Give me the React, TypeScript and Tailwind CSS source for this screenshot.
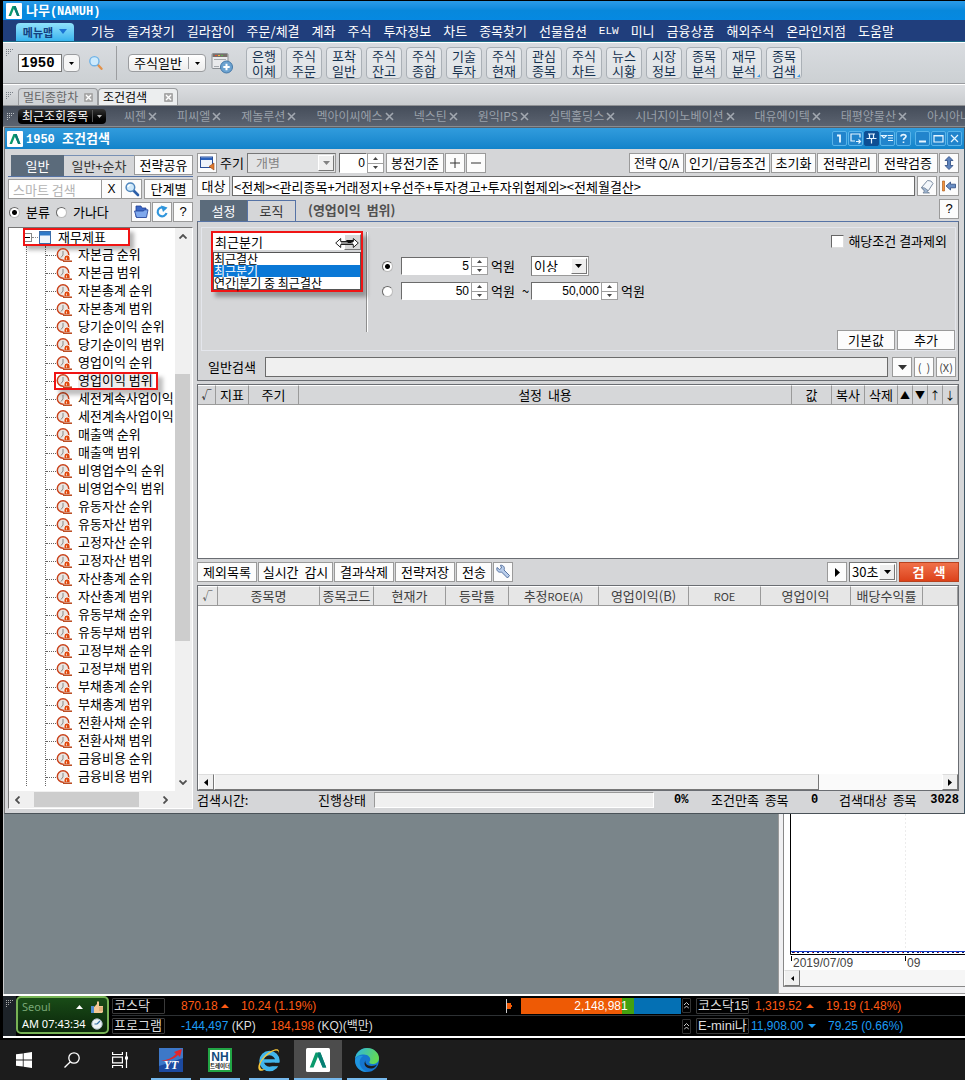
import { useState } from 'react';
import type { ReactNode } from 'react';

const menus = ['기능', '즐겨찾기', '길라잡이', '주문/체결', '계좌', '주식', '투자정보', '차트', '종목찾기', '선물옵션', 'ELW', '미니', '금융상품', '해외주식', '온라인지점', '도움말'];
const quick = [['은행', '이체'], ['주식', '주문'], ['포착', '일반'], ['주식', '잔고'], ['주식', '종합'], ['기술', '투자'], ['주식', '현재'], ['관심', '종목'], ['주식', '차트'], ['뉴스', '시황'], ['시장', '정보'], ['종목', '분석'], ['재무', '분석'], ['종목', '검색']];
const recents = ['씨젠', '피씨엘', '제놀루션', '멕아이씨에스', '넥스틴', '원익IPS', '심텍홀딩스', '시너지이노베이션', '대유에이텍', '태평양물산', '아시아나'];
const treeItems = [
  '자본금 순위', '자본금 범위', '자본총계 순위', '자본총계 범위', '당기순이익 순위', '당기순이익 범위', '영업이익 순위', '영업이익 범위',
  '세전계속사업이익', '세전계속사업이익 ', '매출액 순위', '매출액 범위', '비영업수익 순위', '비영업수익 범위', '유동자산 순위', '유동자산 범위',
  '고정자산 순위', '고정자산 범위', '자산총계 순위', '자산총계 범위', '유동부채 순위', '유동부채 범위', '고정부채 순위', '고정부채 범위',
  '부채총계 순위', '부채총계 범위', '전환사채 순위', '전환사채 범위', '금융비용 순위', '금융비용 범위',
];
const periods = ['최근결산', '최근분기', '연간|분기 중 최근결산'];

function Btn({ children, className = '', label }: { children: ReactNode; className?: string; label?: string }) {
  return (
    <button type="button" aria-label={label} className={`flex h-5 shrink-0 items-center justify-center whitespace-nowrap border border-[#9a9a9a] bg-[#fcfcfc] leading-4 ${className}`}>
      {children}
    </button>
  );
}

function Tri({ dir = 'down', className = 'h-1 w-[7px]' }: { dir?: 'up' | 'down' | 'left' | 'right'; className?: string }) {
  const d = { down: 'M0 0H10L5 10Z', up: 'M0 10H10L5 0Z', left: 'M10 0V10L0 5Z', right: 'M0 0V10L10 5Z' }[dir];
  return (
    <svg viewBox="0 0 10 10" preserveAspectRatio="none" className={`shrink-0 ${className}`} fill="currentColor" aria-hidden="true">
      <path d={d} />
    </svg>
  );
}

function Grip({ className = 'text-[#7a8088]' }: { className?: string }) {
  return (
    <svg viewBox="0 0 8 7" className={`h-[7px] w-2 shrink-0 ${className}`} fill="currentColor" aria-hidden="true">
      <path d="M0 0h1v1H0zM2 0h1v1H2zM4 0h1v1H4zM6 0h1v1H6zM0 2h1v1H0zM2 2h1v1H2zM4 2h1v1H4zM0 4h1v1H0zM2 4h1v1H2zM0 6h1v1H0z" />
    </svg>
  );
}

function NamuLogo({ className = 'size-4' }: { className?: string }) {
  return (
    <svg viewBox="0 0 16 16" className={`shrink-0 ${className}`} aria-hidden="true">
      <rect width="16" height="16" rx="1" fill="#fff" />
      <path d="M2.5 13L6.4 3h3.2l3.9 10h-2.4L8 5.6 5 13z" fill="#0a9a6c" />
      <path d="M8 3h1.6l3.9 10h-2.4L8 5.6z" fill="#067e74" />
    </svg>
  );
}

function Lens({ className = 'size-4' }: { className?: string }) {
  return (
    <svg viewBox="0 0 16 16" className={className} aria-hidden="true">
      <path d="M9.5 9.5l4.5 4.5" stroke="#2b5ea8" strokeWidth="2.6" strokeLinecap="round" />
      <circle cx="6.4" cy="6.2" r="4.3" fill="#cfe9fb" stroke="#4f86bd" strokeWidth="1.5" />
      <path d="M4 6a2.4 2.4 0 0 1 2.4-2.2" stroke="#fff" strokeWidth="1.3" fill="none" />
    </svg>
  );
}

function ToolbarLens() {
  return (
    <svg viewBox="0 0 16 16" className="size-4" aria-hidden="true">
      <path d="M9.800 9.800l3.700 4" stroke="#e2914a" strokeWidth="2.400" strokeLinecap="round" />
      <circle cx="6.400" cy="6.200" r="4.600" fill="#cdeafc" stroke="#6fb2e6" strokeWidth="1.400" />
    </svg>
  );
}

function ClockIcon() {
  return (
    <svg viewBox="0 0 16 14" className="h-3.5 w-4 shrink-0" aria-hidden="true">
      <circle cx="7" cy="6.500" r="5.700" fill="#e9e6e3" stroke="#c9421a" strokeWidth="1.500" />
      <path d="M7 3v4L5 9.500" stroke="#8d8884" strokeWidth="1" fill="none" />
      <path d="M8 12.500V10a3 3 0 0 1 6 0v2.500z" fill="#e04a10" stroke="#fff" strokeWidth=".8" />
      <path d="M10.500 11.500v-2" stroke="#ffd2b8" strokeWidth="1" />
      <path d="M7 13.200h9" stroke="#b43a0c" strokeWidth="1.400" />
    </svg>
  );
}

function Spinner({ label, className = 'h-[18px]' }: { label: string; className?: string }) {
  return (
    <span className={`flex w-[17px] shrink-0 flex-col bg-white ${className}`}>
      <button type="button" aria-label={`${label} 증가`} className="flex flex-1 items-center justify-center border border-[#a0a0a0] text-[#444]"><Tri dir="up" className="h-[3px] w-[5px]" /></button>
      <button type="button" aria-label={`${label} 감소`} className="flex flex-1 items-center justify-center border border-t-0 border-[#a0a0a0] text-[#444]"><Tri className="h-[3px] w-[5px]" /></button>
    </span>
  );
}

function NumberBox({ value, label, className = '' }: { value: string; label: string; className?: string }) {
  return <input type="text" defaultValue={value} aria-label={label} className={`border border-b-white border-l-[#6b6b6b] border-r-white border-t-[#6b6b6b] bg-white pr-px text-right font-['Liberation_Sans'] text-[12px] leading-3 ${className}`} />;
}

function Select({ options, label, className = '', disabled = false }: { options: string[]; label: string; className?: string; disabled?: boolean }) {
  return (
    <span className={`relative flex shrink-0 border border-b-[#9a9a9a] border-l-[#777] border-r-[#9a9a9a] border-t-[#777] ${disabled ? 'bg-[#e2e3e4] text-[#828282]' : 'bg-white'} ${className}`}>
      <select aria-label={label} disabled={disabled} className={`w-full appearance-none bg-transparent leading-3 opacity-100 ${disabled ? 'pl-2' : 'pl-0.5'}`}>
        {options.map((o) => <option key={o}>{o}</option>)}
      </select>
      <span className="pointer-events-none absolute inset-y-px right-px flex w-4 items-center justify-center border border-b-[#777] border-l-white border-r-[#777] border-t-white bg-[#efefef]">
        <Tri />
      </span>
    </span>
  );
}

function Radio({ name, label, defaultChecked = false }: { name: string; label?: string; defaultChecked?: boolean }) {
  return <input type="radio" name={name} aria-label={label} defaultChecked={defaultChecked} className="size-[11px] shrink-0 appearance-none rounded-full border border-b-[#bbb] border-l-[#666] border-r-[#bbb] border-t-[#666] bg-white bg-[radial-gradient(circle,#fff_100%,#fff_100%)] checked:bg-[radial-gradient(circle,#000_0_2px,#fff_3px)]" />;
}

const thBase = 'border-b border-r border-b-[#9a9a9a] border-r-[#9a9a9a] border-t border-t-white p-0 text-center font-normal leading-4 overflow-hidden whitespace-nowrap';

function GridHead({ cols, className }: { cols: [ReactNode, string][]; className: string }) {
  return (
    <table className="w-full table-fixed border-separate border-spacing-0">
      <thead>
        <tr className="h-5">
          {cols.map(([c, w], i) => <th key={i} scope="col" className={`${thBase} ${className} ${w}`}>{c}</th>)}
        </tr>
      </thead>
    </table>
  );
}

function TopBars() {
  return (
    <header>
      <div className="flex h-[19px] items-center gap-1 overflow-hidden bg-gradient-to-b from-[#2a9be8] via-[#0788dc] to-[#0589e2] px-[3px] font-bold text-white">
        <NamuLogo />
        <h1 className="leading-4">나무<span className="font-['Liberation_Mono'] text-[12px]">(NAMUH)</span></h1>
      </div>
      <nav className="flex h-[21px] items-center gap-3 overflow-hidden bg-[#203e7c] pl-[13px] text-white">
        <button type="button" className="mr-[5px] mt-0.5 flex h-[18px] w-[58px] shrink-0 items-center justify-center gap-1.5 rounded-t-sm bg-gradient-to-b from-[#8fe2fb] to-[#35b3ee] text-[11px] font-bold leading-4 text-[#14407e]">
          메뉴맵 <Tri className="h-[5px] w-2 text-[#1b74d4]" />
        </button>
        {menus.map((m) => <a key={m} href="#menu" className={`shrink-0 leading-4 ${m === 'ELW' ? "font-['Liberation_Mono'] text-[11px]" : ''}`}>{m}</a>)}
      </nav>
      <div className="h-0.5 border-b border-white bg-[#1c6a86]" />
      <div className="flex h-[41px] gap-1 overflow-hidden border-b border-[#9a9c9f] bg-gradient-to-b from-[#d9dce0] to-[#ccd0d3] pl-[3px]">
        <div className="pt-1.5"><Grip /></div>
        <div className="flex items-center">
          <input type="text" aria-label="화면번호" defaultValue="1950" className="h-[18px] w-11 border border-[#777] bg-white pl-0.5 font-['Liberation_Mono'] text-[14px] font-bold" />
          <button type="button" aria-label="화면번호 목록" className="ml-px flex h-[18px] w-[17px] items-center justify-center rounded-sm border border-[#9a9c9f] bg-[#f6f6f6]"><Tri className="h-[3px] w-[5px]" /></button>
          <button type="button" aria-label="화면 찾기" className="ml-2"><ToolbarLens /></button>
          <span className="ml-3 h-[34px] w-px bg-[#9b9da0]" />
          <button type="button" className="ml-[11px] flex h-[18px] w-[78px] items-center rounded-sm border border-[#9a9c9f] bg-gradient-to-b from-white to-[#ececec] pl-[5px] leading-4">
            주식일반<span className="ml-1.5 h-3 w-px bg-[#9b9da0]" /><Tri className="ml-1.5 h-[3px] w-[5px]" />
          </button>
          <button type="button" aria-label="화면 추가" className="ml-[5px]">
            <svg viewBox="0 0 23 22" className="h-[22px] w-[23px]" aria-hidden="true">
              <rect x="1" y="1.5" width="16" height="15" rx="1" fill="#e9eaec" stroke="#8b8f94" />
              <path d="M1.5 2h15v3h-15z" fill="#77706a" /><path d="M4 3h2v1H4z" fill="#e34a2f" /><path d="M7 3h2v1H7z" fill="#f0b53b" /><path d="M10 3h2v1h-2z" fill="#59b450" />
              <path d="M3 7h12v1H3zM3 14h5v1H3z" fill="#a5a9ae" />
              <circle cx="15.5" cy="15" r="6" fill="#6ba2d0" stroke="#4478a8" />
              <path d="M15.5 11.8v6.4M12.3 15h6.4" stroke="#fff" strokeWidth="2" />
            </svg>
          </button>
        </div>
        <div className="ml-2 flex gap-1 pt-1">
          {quick.map(([a, b], i) => (
            <button key={i} type="button" className="relative h-8 w-9 shrink-0 rounded-sm border border-[#aab0b6] bg-gradient-to-b from-[#e6e9ec] to-[#e0e3e6] leading-[15px] text-[#16324f]">
              {a}<br />{b}
              {i > 11 && <svg viewBox="0 0 3 3" className="absolute bottom-px right-px size-[3px]" aria-hidden="true"><path d="M3 0v3H0z" fill="#3f9de8" /></svg>}
            </button>
          ))}
        </div>
      </div>
      <div className="flex h-[22px] items-end overflow-hidden border-b border-t border-b-[#8f9194] border-t-white bg-gradient-to-b from-[#dcdee1] to-[#c9cccf] pl-[3px] text-[12px]">
        <div className="mr-1 self-center"><Grip /></div>
        {['멀티종합차', '조건검색'].map((t, i) => (
          <div key={t} className={`flex h-[17px] w-20 shrink-0 items-center justify-between rounded-t-sm border border-b-0 border-[#9a9c9f] px-1 ${i ? 'bg-[#eceeef] text-black' : 'bg-[#d0d3d6] text-[#666]'}`}>
            <a href="#tab" className="leading-4">{t}</a>
            <button type="button" aria-label={`${t} 닫기`} className="flex size-[9px] items-center justify-center rounded-[1px] bg-[#a8a8a8]">
              <svg viewBox="0 0 7 7" className="size-[7px]" stroke="#fff" strokeWidth="1.4" aria-hidden="true"><path d="M1 1l5 5M6 1L1 6" /></svg>
            </button>
          </div>
        ))}
      </div>
      <div className="flex h-[21px] items-center overflow-hidden border-b border-[#8b8d90] bg-gradient-to-b from-[#454d5a] to-[#5b6370] pl-1 text-[12px] text-[#99a0a9]">
        <Grip className="text-[#c0c4c8]" />
        <button type="button" className="ml-[3px] mr-[18px] flex h-[15px] w-[88px] shrink-0 items-center rounded-sm bg-gradient-to-b from-[#333] to-black pl-1 leading-[14px] text-white">
          최근조회종목<span className="ml-1 h-3 w-px bg-[#555]" /><Tri className="ml-1 h-[3px] w-[5px] text-[#bbb]" />
        </button>
        {recents.map((r) => (
          <span key={r} className="mr-5 flex shrink-0 items-center gap-0.5">
            <a href="#stock" className="leading-4">{r}</a>
            <button type="button" aria-label={`${r} 삭제`}><svg viewBox="0 0 9 9" className="size-[9px]" stroke="#a2a8b0" strokeWidth="1.6" aria-hidden="true"><path d="M1 1l7 7M8 1L1 8" /></svg></button>
          </span>
        ))}
      </div>
    </header>
  );
}

const capIcons: [string, ReactNode][] = [
  ['화면 그룹', <path key="a" d="M5 4.500h3V11.500" strokeWidth="1.800" />],
  ['화면 복사', <path key="a" d="M12 6.500V3H3v7h4M8 10.500h4.500M10.500 8.500l2 2-2 2" />],
  ['고정', <path key="a" d="M4 3h7M5.500 3v4M9.500 3v4M2.500 7.500h10M7.500 7.500V12.500" />],
  ['메뉴', <path key="a" d="M1.500 4.500h5L4 7zM8 4.500h5M8 7h5M8 9.500h5" />],
  ['도움말', <path key="a" d="M5 5.500C5 3 10 3 10 5.500 10 7 7.500 7 7.500 9M7.500 10.500v1.500" strokeWidth="1.600" />],
];
const winIcons: [string, ReactNode][] = [
  ['최소화', <path key="a" d="M4 10.500h7" strokeWidth="2" />],
  ['최대화', <path key="a" d="M3 4.500h9V11H3zM3 5h9" />],
  ['닫기', <path key="a" d="M4 4l7 7M11 4l-7 7" />],
];

function CapBtn({ icon, dark }: { icon: [string, ReactNode]; dark?: boolean }) {
  return (
    <button type="button" aria-label={icon[0]} className={`flex size-[15px] items-center justify-center rounded-[2px] border ${dark ? 'border-[#0d4f94] bg-[#0d4f94]' : 'border-[#58b4ea] bg-[#2184cc]'}`}>
      <svg viewBox="0 0 15 15" className="size-[15px] shrink-0" fill="none" stroke="#e6f5ff" strokeWidth="1.2" aria-hidden="true">{icon[1]}</svg>
    </button>
  );
}

function TreePanel() {
  return (
    <aside className="flex w-[185px] shrink-0 flex-col pt-0.5">
      <div className="flex h-[22px] items-end border-b border-[#5673a5] pl-[3px]">
        <button type="button" className="h-[21px] w-[53px] bg-[#5b6b7b] text-white">일반</button>
        <button type="button" className="h-[21px] w-[70px] border-t border-[#7890b4] text-[#333]">일반+순차</button>
        <Btn className="w-[59px] self-start">전략공유</Btn>
      </div>
      <div className="mt-0.5 flex h-5">
        <input type="text" aria-label="스마트 검색" placeholder="스마트 검색" className="h-5 w-[94px] border border-[#9a9a9a] bg-white pl-1 placeholder:text-[#b4b4b4]" />
        <Btn label="지우기" className="w-5 border-l-0"><span className="font-['Liberation_Sans'] text-[12px]">X</span></Btn>
        <Btn label="검색" className="mr-0.5 w-5 border-l-0"><Lens /></Btn>
        <Btn className="w-[49px]">단계별</Btn>
      </div>
      <div className="mt-[3px] flex h-5 items-center pl-px">
        <label className="flex items-center gap-1.5 leading-4"><Radio name="sort" defaultChecked />분류</label>
        <label className="ml-1.5 flex items-center gap-1.5 leading-4"><Radio name="sort" />가나다</label>
        <div className="ml-auto flex gap-px">
          <Btn label="폴더" className="w-5">
            <svg viewBox="0 0 16 16" className="size-4" aria-hidden="true"><path d="M3 2h5l1 2h4v9H3z" fill="#3c68c6" stroke="#1f3f95" strokeWidth=".8" /><path d="M1.500 7h9l1-1.200H15L13.500 13.500H3.500z" fill="#7fa8ec" stroke="#1f3f95" strokeWidth=".8" /></svg>
          </Btn>
          <Btn label="새로고침" className="w-5">
            <svg viewBox="0 0 16 16" className="size-4" aria-hidden="true"><path d="M11.800 5.200A4.500 4.500 0 1 0 12.500 9" fill="none" stroke="#2f95dc" strokeWidth="2.200" /><path d="M7 1.500L13.500 3.500 9 8z" fill="#2f95dc" /></svg>
          </Btn>
          <Btn label="도움말" className="w-5"><span className="font-['Liberation_Sans']">?</span></Btn>
        </div>
      </div>
      <div className="mt-[5px] flex flex-1 flex-col border border-b-white border-l-[#777] border-r-white border-t-[#777] bg-white">
        <div className="flex flex-1">
          <ul className="relative min-w-0 flex-1 pl-[14px]">
            <li className="relative flex h-[18px] items-center">
              <span className="flex size-[9px] shrink-0 items-center justify-center border border-[#888] bg-white"><span className="h-px w-[5px] bg-black" /></span>
              <span className="w-1.5 border-b border-dotted border-[#888]" />
              <svg viewBox="0 0 12 13" className="ml-px h-[13px] w-3" aria-hidden="true"><rect x=".5" y=".5" width="11" height="12" fill="#eef4fb" stroke="#3b6ca8" /><path d="M1 1h10v3.500H1z" fill="#2f79c8" /></svg>
              <button type="button" className="ml-[7px] leading-4">재무제표</button>
              <span className="pointer-events-none absolute inset-y-0 left-0 w-[107px] border-2 border-[#f01414] shadow-[4px_4px_4px_rgba(0,0,0,0.3)]" />
            </li>
            <li className="ml-[3px] border-l border-dotted border-[#666] pl-[18px]">
              <ul className="border-l border-dotted border-[#666]">
                {treeItems.map((t, i) => (
                  <li key={t} className="relative flex h-[18px] items-center overflow-visible">
                    <span className="w-2.5 shrink-0 border-b border-dotted border-[#666]" />
                    <ClockIcon />
                    <button type="button" className="ml-1.5 min-w-0 flex-1 overflow-hidden whitespace-nowrap pb-0.5 text-left leading-4">
                      <span className={i === 7 ? 'bg-[#ededed]' : ''}>{t}</span>
                    </button>
                    {i === 7 && <span className="pointer-events-none absolute inset-y-0 left-2 z-10 w-[104px] border-2 border-[#f01414] shadow-[5px_5px_4px_rgba(0,0,0,0.25)]" />}
                  </li>
                ))}
              </ul>
            </li>
          </ul>
          <div className="flex w-[17px] shrink-0 flex-col items-center bg-[#f0f0f0] py-1.5 pr-0.5">
            <svg viewBox="0 0 8 5" className="h-[5px] w-2" fill="none" stroke="#505050" strokeWidth="1.800" aria-hidden="true"><path d="M.5 4.500L4 1l3.500 3.500" /></svg>
            <span className="flex-[133]" />
            <span className="w-[15px] flex-[262] bg-[#cdcdcd]" />
            <span className="flex-[137]" />
            <svg viewBox="0 0 8 5" className="h-[5px] w-2" fill="none" stroke="#505050" strokeWidth="1.800" aria-hidden="true"><path d="M.5.500L4 4 7.500.500" /></svg>
          </div>
        </div>
        <div className="flex h-[17px] items-center bg-[#f0f0f0] pl-1.5">
          <svg viewBox="0 0 5 8" className="h-2 w-[5px]" fill="none" stroke="#505050" strokeWidth="1.800" aria-hidden="true"><path d="M4.500.500L1 4l3.500 3.500" /></svg>
          <span className="ml-3.5 h-[15px] w-[105px] bg-[#cdcdcd]" />
          <svg viewBox="0 0 5 8" className="ml-6 h-2 w-[5px]" fill="none" stroke="#505050" strokeWidth="1.800" aria-hidden="true"><path d="M.5.500L4 4 .5 7.500" /></svg>
        </div>
      </div>
    </aside>
  );
}

function PeriodPicker() {
  const [value, setValue] = useState(periods[1]);
  return (
    <div className="relative h-[61px] w-[152px] shrink-0 border-2 border-[#f01414] shadow-[4px_5px_4px_rgba(0,0,0,0.3)]">
      <button type="button" aria-haspopup="listbox" className="flex h-[17px] w-full items-center justify-between bg-white pl-0.5 leading-4">
        {value}
        <span className="flex h-4 w-[17px] items-center justify-center border border-b-[#777] border-l-white border-r-[#777] border-t-white bg-[#d8d8d8]"><Tri /></span>
      </button>
      <svg viewBox="0 0 24 12" className="pointer-events-none absolute right-0.5 top-1 h-3 w-6" aria-hidden="true">
        <path d="M.7 6l5-4.500v3h12.600v-3l5 4.500-5 4.500v-3H5.700v3z" fill="#fff" stroke="#222" />
        <path d="M6 6h12" stroke="#222" />
        <path d="M11 3h8l-3 3h-3z" fill="#111" />
      </svg>
      <ul role="listbox" aria-label="결산 기준" className="mt-0.5 border border-[#555] bg-white">
        {periods.map((p) => (
          <li key={p} role="option" aria-selected={p === value} onClick={() => setValue(p)} className={`h-3 whitespace-nowrap text-[12px] leading-3 ${p === value ? 'bg-[#0a78d6] text-white' : ''}`}>{p}</li>
        ))}
      </ul>
    </div>
  );
}

function ConditionPanel() {
  return (
    <section className="border border-[#6a6d72] border-t-[#5673a5] pb-[3px]">
      <div className="ml-[3px] mr-0.5 mt-[5px] flex h-[124px] border border-[#e4e6ec] pl-[9px] pt-[3px]">
        <PeriodPicker />
        <span className="ml-[3px] mt-px h-[100px] w-0.5 border-r border-white bg-[#8e8e8e]" />
        <div className="ml-3.5 flex flex-col gap-[7px] pt-[26px]">
          <div className="flex h-[18px] items-center">
            <Radio name="amount" label="이상" defaultChecked />
            <NumberBox value="5" label="금액" className="ml-2 h-[18px] w-[70px]" /><Spinner label="금액" />
            <span className="ml-[3px]">억원</span>
            <Select label="비교" options={['이상', '이하']} className="ml-4 h-5 w-[58px]" />
          </div>
          <div className="flex h-[18px] items-center">
            <Radio name="amount" label="범위" />
            <NumberBox value="50" label="최소 금액" className="ml-2 h-[18px] w-[70px]" /><Spinner label="최소 금액" />
            <span className="ml-[3px]">억원</span><span className="ml-[7px] w-[9px]">~</span>
            <NumberBox value="50,000" label="최대 금액" className="h-[18px] w-[70px]" /><Spinner label="최대 금액" />
            <span className="ml-[3px]">억원</span>
          </div>
        </div>
        <div className="ml-auto flex flex-col items-end justify-between">
          <label className="flex items-center gap-1 pr-2 pt-0.5 leading-4">
            <input type="checkbox" className="size-[13px] appearance-none border border-b-[#ddd] border-l-[#666] border-r-[#ddd] border-t-[#666] bg-white checked:bg-[#333]" />해당조건 결과제외
          </label>
          <div className="flex gap-0.5"><Btn className="w-[58px]">기본값</Btn><Btn className="w-[58px]">추가</Btn></div>
        </div>
      </div>
      <div className="mt-1.5 flex h-5 items-center gap-0.5 pl-2.5 pr-0.5">
        <label htmlFor="expr" className="mr-[7px]">일반검색</label>
        <input id="expr" type="text" className="mr-0.5 h-5 min-w-0 flex-1 border border-[#6b6b6b] bg-[#f0f0f0] px-1" />
        <Btn label="목록" className="w-5 text-[#333]"><Tri className="h-[5px] w-[9px]" /></Btn>
        <Btn className="w-5 text-[11px] text-[#444]">(&nbsp; )</Btn>
        <Btn className="w-5 text-[11px] text-[#444]">(X)</Btn>
      </div>
    </section>
  );
}

function SearchPanel() {
  return (
    <main className="flex min-w-0 flex-1 flex-col gap-[3px]">
      <div className="flex h-5 items-center">
        <Btn label="창 이동" className="w-5">
          <svg viewBox="0 0 16 16" className="size-4" aria-hidden="true"><rect x="1.500" y="2" width="12" height="10.500" fill="#eef3fb" stroke="#2b4f98" /><path d="M2 2.500h11v2.500H2z" fill="#2b62bd" /><path d="M15 8v7l-5-3.500z" fill="#e07a2d" stroke="#934410" strokeWidth=".6" /></svg>
        </Btn>
        <span className="ml-[3px] w-[27px]">주기</span>
        <Select label="주기" options={['개별']} disabled className="h-5 w-[89px]" />
        <NumberBox value="0" label="봉전" className="ml-[3px] h-5 w-7" /><Spinner label="봉전" className="h-5" />
        <Btn className="ml-0.5 w-[58px]">봉전기준</Btn>
        <Btn label="추가" className="ml-px w-5"><svg viewBox="0 0 10 10" className="size-2.5" stroke="#333" aria-hidden="true"><path d="M0 5h10M5 0v10" /></svg></Btn>
        <Btn label="삭제" className="ml-px w-5"><svg viewBox="0 0 10 10" className="size-2.5" stroke="#333" aria-hidden="true"><path d="M0 5h10" /></svg></Btn>
        <div className="ml-auto flex gap-px">
          <Btn className="w-[55px]"><span className="text-[12px]">전략 Q/A</span></Btn>
          <Btn className="w-[85px]">인기/급등조건</Btn>
          <Btn className="w-[45px]">초기화</Btn>
          <Btn className="w-[60px]">전략관리</Btn>
          <Btn className="w-[60px]">전략검증</Btn>
          <Btn label="높이 조절" className="w-5"><svg viewBox="0 0 10 14" className="h-3.5 w-2.5" aria-hidden="true"><path d="M5 .5l4 4H6.500v5H9l-4 4-4-4h2.500v-5H1z" fill="#5d83bd" stroke="#2c4a80" strokeWidth=".8" /></svg></Btn>
        </div>
      </div>
      <div className="flex h-5 gap-0.5">
        <Btn className="w-[33px]">대상</Btn>
        <input type="text" aria-label="대상" readOnly value="<전체><관리종목+거래정지+우선주+투자경고+투자위험제외><전체월결산>" className="h-5 min-w-0 flex-1 border border-[#6b6b6b] bg-white pl-px" />
        <Btn label="지우개" className="w-5"><svg viewBox="0 0 16 16" className="size-4" aria-hidden="true"><path d="M2.500 9.500l6-7Q12.500 2 14 5.500L9.500 12.500Q4.500 13.500 2.500 9.500z" fill="#f3f7fb" stroke="#7d8ea3" /><path d="M2.500 9.500Q5.500 9 9 12.500L8 13.500l2.500 1.500H4l1.500-2z" fill="#9fb6d2" stroke="#6d7f96" strokeWidth=".8" /></svg></Btn>
        <Btn label="패널 접기" className="w-5"><svg viewBox="0 0 16 16" className="size-4" aria-hidden="true"><path d="M1.500 3h2v10h-2z" fill="#f3923b" stroke="#a3510f" strokeWidth=".6" /><path d="M5 8l4.500-4v2.200H14.500v3.600H9.500V12z" fill="#6a8fc4" stroke="#2c4a80" strokeWidth=".8" /></svg></Btn>
      </div>
      <div>
        <div className="flex h-[22px] items-end pl-[3px]">
          <button type="button" className="h-[21px] w-[47px] bg-[#5b6b7b] text-white">설정</button>
          <button type="button" className="h-[21px] w-[49px] border border-b-0 border-[#5673a5] text-[#333]">로직</button>
          <h2 className="ml-3 self-center font-bold leading-4 text-[#505050]">(영업이익&nbsp; 범위)</h2>
          <Btn label="도움말" className="ml-auto w-5 self-start"><span className="font-['Liberation_Sans']">?</span></Btn>
        </div>
        <ConditionPanel />
      </div>
      <div className="h-[175px] border border-[#6a6d72] bg-white">
        <GridHead className="bg-[#d6d7d9]" cols={[['√', 'w-[18px] text-[10px]'], ['지표', 'w-[33px]'], ['주기', 'w-[50px]'], [<>설정&nbsp; 내용</>, ''], ['값', 'w-10'], ['복사', 'w-[33px]'], ['삭제', 'w-[33px]'], ['▲', 'w-[15px] text-[10px]'], ['▼', 'w-[15px] text-[10px]'], ['↑', 'w-[15px] text-[11px]'], ['↓', 'w-[15px] text-[11px]']]} />
      </div>
      <div className="flex h-5 gap-px">
        <Btn className="w-[60px]">제외목록</Btn><Btn className="w-[75px]">실시간&nbsp; 감시</Btn><Btn className="w-[60px]">결과삭제</Btn><Btn className="w-[60px]">전략저장</Btn><Btn className="w-9">전송</Btn>
        <Btn label="설정" className="w-5"><svg viewBox="0 0 16 16" className="size-4" aria-hidden="true"><path d="M2 3.500l2.500 2 2-1.500L5.500 1.200C9 1 10 4 9 6l5.500 5.500-2 2.500L6.500 8C3.500 9 1 6.500 2 3.500z" fill="#b9cdea" stroke="#4a6696" strokeWidth=".9" /></svg></Btn>
        <div className="ml-auto flex gap-0.5">
          <Btn label="실행" className="w-5"><Tri dir="right" className="h-[9px] w-[5px]" /></Btn>
          <Select label="주기 초" options={['30초']} className="h-5 w-12" />
          <button type="button" className="h-5 w-[60px] border border-[#b8421f] bg-gradient-to-b from-[#f07048] to-[#dc4119] font-bold leading-4 text-white">검&nbsp;&nbsp; 색</button>
        </div>
      </div>
      <div>
        <div className="flex h-[206px] flex-col border border-[#6a6d72] bg-white">
          <GridHead className="bg-[#e6e6e6] text-[#404040]" cols={[['√', 'w-5 text-[10px]'], ['종목명', 'w-[102px]'], ['종목코드', 'w-[54px]'], ['현재가', 'w-[72px]'], ['등락률', 'w-[63px]'], [<>추정<span className="text-[11px]">ROE(A)</span></>, 'w-[90px]'], ['영업이익(B)', 'w-[90px]'], [<span key="r" className="text-[11px]">ROE</span>, 'w-[72px]'], ['영업이익', 'w-[90px]'], ['배당수익률', 'w-[72px]'], ['', '']]} />
          <div className="mt-auto flex h-4 bg-[#fafafa]">
            <button type="button" aria-label="왼쪽" className="flex w-4 items-center justify-center border border-b-[#777] border-l-white border-r-[#777] border-t-[#ddd] bg-[#f0f0f0]"><Tri dir="left" className="h-[7px] w-1" /></button>
            <span className="w-[605px] border border-b-[#777] border-l-white border-r-[#777] border-t-[#ddd] bg-[#f0f0f0]" />
            <button type="button" aria-label="오른쪽" className="ml-auto flex w-4 items-center justify-center border border-b-[#777] border-l-white border-r-[#777] border-t-[#ddd] bg-[#f0f0f0]"><Tri dir="right" className="h-[7px] w-1" /></button>
          </div>
        </div>
        <div className="flex h-[18px] items-center">
          <span className="w-[121px]">검색시간:</span>
          <span className="w-14">진행상태</span>
          <span className="h-4 w-[280px] border border-b-white border-l-[#999] border-r-white border-t-[#999] bg-[#f0f0f0]" />
          <b className="ml-5 w-[37px] font-['Liberation_Mono'] text-[12px]">0%</b>
          <span className="w-[100px]">조건만족&nbsp; 종목</span>
          <b className="w-7 font-['Liberation_Mono'] text-[12px]">0</b>
          <span>검색대상&nbsp; 종목</span>
          <b className="ml-auto font-['Liberation_Mono'] text-[12px]">3028</b>
        </div>
      </div>
    </main>
  );
}

function ChartWindow() {
  return (
    <section aria-label="차트" className="ml-auto flex w-[187px] flex-col border-b border-l border-[#9a9a9a] bg-[#f0f0f2] pb-1.5 pl-1">
      <div className="flex flex-1 flex-col border-b border-l border-[#888] bg-white">
        <svg viewBox="0 0 181 142" preserveAspectRatio="none" className="h-[142px] w-full" aria-hidden="true">
          <path d="M6.500 0v140.500H181" fill="none" stroke="#000" />
          <path d="M121.500 0v140" stroke="#ececec" strokeDasharray="2 2" />
          <path d="M7 137.500h174" stroke="#1438c8" />
          <path d="M8 138.500h173" stroke="#101a60" strokeDasharray="2 3" />
          <path d="M10 138.500h171" stroke="#d03030" strokeDasharray="1 17" />
        </svg>
        <div className="flex font-['Liberation_Sans'] text-[12px] leading-[14px] text-[#444]">
          <div className="ml-[7px] flex w-[114px]"><span className="h-[5px] w-px bg-black" /><time className="pl-px">2019/07/09</time></div>
          <div className="flex"><span className="h-[5px] w-px bg-black" /><time className="pl-px">09</time></div>
        </div>
        <div className="mt-auto flex h-4 bg-[#f6f6f6]">
          <button type="button" aria-label="차트 왼쪽" className="flex w-4 items-center justify-center border border-b-[#777] border-l-white border-r-[#777] border-t-[#ddd] bg-[#f0f0f0]"><Tri dir="left" className="h-[5px] w-[3px]" /></button>
        </div>
      </div>
    </section>
  );
}

function Chevrons() {
  return (
    <button type="button" aria-label="위로" className="mr-[5px] flex h-[15px] w-[9px] shrink-0 items-center justify-center rounded-[1px] border border-[#333]">
      <svg viewBox="0 0 5 7" className="h-[7px] w-[5px]" fill="none" stroke="#ccc" aria-hidden="true"><path d="M0 3l2.500-2.500L5 3M0 6.500L2.500 4 5 6.500" /></svg>
    </button>
  );
}

const tag = 'flex h-4 w-[53px] shrink-0 items-center overflow-hidden whitespace-nowrap rounded-[1px] border border-[#3a3a3a] pl-px leading-4 text-[#ddd]';

function StatusBar() {
  return (
    <footer className="flex h-11 overflow-hidden border-b-2 border-t-2 border-white bg-black font-['Liberation_Sans','Noto_Sans_CJK_KR',sans-serif] text-[12px] leading-4">
      <div className="w-[13px] shrink-0 bg-[#1d2329] pl-[3px] pt-1"><Grip className="text-[#aaa]" /></div>
      <div className="flex h-[38px] w-[93px] shrink-0 flex-col justify-around rounded-[5px] border-2 border-[#77b255] bg-gradient-to-b from-[#194c17] to-[#0b260b] px-1 font-['Noto_Sans',sans-serif] text-[11px]">
        <div className="flex items-center text-[#79a876]"><span className="flex-1">Seoul</span><Tri dir="up" className="mr-2 h-1 w-[7px] text-white" />
          <svg viewBox="0 0 12 12" className="size-3" aria-hidden="true"><path d="M0 5h3v7H0z" fill="#4f8cd1" /><path d="M3 6l3-3V.5h2V5h4v6l-1 1H3z" fill="#f4c795" /><path d="M8 7h4M8 9h4" stroke="#b77c46" strokeWidth=".6" /></svg>
        </div>
        <div className="flex items-center whitespace-nowrap text-white"><time className="flex-1">AM 07:43:34</time>
          <svg viewBox="0 0 12 12" className="size-3" aria-hidden="true"><circle cx="6" cy="6" r="5.200" fill="#eef3f7" stroke="#aab9c5" /><path d="M6 6l3-3M6 6H3.500" stroke="#3470a8" strokeWidth="1.200" /></svg>
        </div>
      </div>
      <div className="ml-[3px] grid min-w-0 flex-1 grid-rows-2 divide-y divide-[#2d3134]">
        <div className="flex items-center whitespace-nowrap text-[#ff5a14]">
          <span className={`${tag} text-[13px]`}>코스닥</span>
          <span className="ml-4 w-[39px]">870.18</span><Tri dir="up" className="ml-px h-1 w-2" /><span className="ml-3 w-[30px]">10.24</span>&nbsp;(1.19%)
          <svg viewBox="0 0 7 14" className="ml-auto h-3.5 w-[7px]" aria-hidden="true"><path d="M.5 0v14" stroke="#ccc" /><path d="M1 4h4v2h1v2H5v2H1z" fill="#f25a05" /></svg>
          <div className="relative ml-2 flex h-4 w-40 shrink-0 text-white">
            <span className="w-[101px] bg-[#ee5a05]" /><span className="w-3 bg-[#43a00f]" /><span className="flex-1 bg-[#0470b4]" />
            <span className="absolute inset-0 text-center">2,148,981</span>
          </div>
          <span className="w-px" /><Chevrons />
          <span className={`${tag} text-[13px]`}>코스닥150</span>
          <div className="flex w-[216px] items-center"><span className="w-[53px] pl-1.5">1,319.52</span><Tri dir="up" className="ml-1 h-1 w-2" /><span className="ml-3 w-[30px]">19.19</span>&nbsp;(1.48%)</div>
        </div>
        <div className="flex items-center whitespace-nowrap text-[#ddd]">
          <span className={`${tag} text-[13px]`}>프로그램</span>
          <span className="ml-4 text-[#1b9cf5]">-144,497</span>&nbsp;(KP)
          <span className="ml-[15px] text-[#ff5a14]">184,198</span>&nbsp;(KQ)(백만)
          <span className="ml-auto" /><Chevrons />
          <span className={`${tag} text-[13px]`}>E-mini나.</span>
          <div className="flex w-[216px] items-center text-[#1b9cf5]"><span className="w-[54px] pl-0.5">11,908.00</span><Tri className="ml-[5px] h-1 w-2" /><span className="ml-3 w-[30px]">79.25</span>&nbsp;(0.66%)</div>
        </div>
      </div>
    </footer>
  );
}

const taskApps: [string, ReactNode][] = [
  ['YT', <svg key="yt" viewBox="0 0 24 24" className="size-6" aria-hidden="true"><rect width="24" height="24" fill="#1c4aa0" /><path d="M0 0h24v10L0 18z" fill="#3d78c8" /><path d="M2 13c6-1 11-3 15-7l-2-2 8-3-2 8-2-2c-4 4-10 6-17 6z" fill="#e3252b" /><text x="12" y="21" textAnchor="middle" fontFamily="Liberation Serif" fontStyle="italic" fontWeight="bold" fontSize="12" fill="#fff">YT</text></svg>],
  ['NH', <svg key="nh" viewBox="0 0 24 24" className="size-6" aria-hidden="true"><rect width="24" height="24" fill="#22a545" /><rect x="2" y="2" width="20" height="20" fill="#fff" /><text x="12" y="12.500" textAnchor="middle" fontFamily="Liberation Sans" fontWeight="bold" fontSize="12" fill="#124a7c">NH</text><text x="12" y="20" textAnchor="middle" fontFamily="Noto Sans CJK KR" fontWeight="bold" fontSize="5.500" fill="#111">트레이더</text></svg>],
  ['Internet Explorer', <svg key="ie" viewBox="0 0 24 24" className="size-6" aria-hidden="true"><circle cx="12.500" cy="13" r="8" fill="none" stroke="#42b6ec" strokeWidth="4.500" /><path d="M6 13h16" stroke="#42b6ec" strokeWidth="3.500" /><path d="M14.500 14.800h9.500v3.400h-9.500z" fill="#1c1c1c" /><path d="M2 22C-1 18 6 7 14 3c5-2.500 9-2.500 7.500 2 .2-4-5-2.500-9 .5C6 10 1 17 4 20.500c1 1.200 3 1 5 .2-2.500 1.900-5.500 3-7 1.300z" fill="#f7c63a" /></svg>],
  ['나무', <NamuLogo key="n" className="size-6" />],
  ['Edge', <svg key="e" viewBox="0 0 24 24" className="size-6" aria-hidden="true"><defs><linearGradient id="eg" x1="0" y1="0" x2="1" y2=".3"><stop offset="0" stopColor="#2bb3e8" /><stop offset="1" stopColor="#62da56" /></linearGradient></defs><circle cx="12" cy="12" r="12" fill="#1576cf" /><path d="M0 11C1 4 6 0 12 0c7 0 12 5 12 10 0 4-3 6-6.500 6-2.500 0-3.800-1-3-2.200C17 10 13 6.500 9 6.500c-4.500 0-8 2-9 4.500z" fill="url(#eg)" /><path d="M10.500 12.500c-1 2.500 1.500 5.500 6 5.500 2.500 0 4.500-.8 5.500-1.500-1 2-2.500 3.200-4 3.700-6 1.500-10.500-3.200-7.500-7.700z" fill="#1c1c1c" /><path d="M8 8c-5 3-5 12 4 16C4 24 0 18 0 12c1-3 4-5 8-4z" fill="#1f95df" /></svg>],
];

function Taskbar() {
  return (
    <nav className="mt-0.5 flex h-10 bg-[#1c1c1c]">
      <button type="button" aria-label="시작" className="flex w-12 items-center justify-center"><svg viewBox="0 0 16 16" className="size-4" fill="#fff" aria-hidden="true"><path d="M0 2.300L6.800 1.400v6.200H0zM7.600 1.300L16 0v7.600H7.600zM0 8.400h6.800v6.200L0 13.700zM7.600 8.400H16V16l-8.400-1.200z" /></svg></button>
      <button type="button" aria-label="검색" className="flex w-12 items-center justify-center"><svg viewBox="0 0 16 16" className="size-4" fill="none" stroke="#fff" strokeWidth="1.300" aria-hidden="true"><circle cx="10" cy="6" r="5.200" /><path d="M6.400 9.700L.5 15.500" /></svg></button>
      <button type="button" aria-label="작업 보기" className="mr-[3px] flex w-12 items-center justify-center"><svg viewBox="0 0 16 16" className="size-4" fill="none" stroke="#fff" strokeWidth="1.200" aria-hidden="true"><path d="M.6 0v2.500h9.800V0M.6 16v-2.500h9.800V16M.6 5.200h9.800v5.600H.6zM14.500 0v16" /><path d="M13 4.500h3v3h-3z" fill="#fff" stroke="none" /></svg></button>
      <div className="flex gap-px">
        {taskApps.map(([n, icon], i) => (
          <button key={n} type="button" aria-label={n} className={`relative flex w-12 items-center justify-center ${i === 3 ? 'bg-[#4c4c4c]' : ''}`}>
            {icon}<span className={`absolute bottom-0 h-0.5 bg-[#76b9ed] ${i === 3 ? 'w-12' : 'w-10'}`} />
          </button>
        ))}
      </div>
    </nav>
  );
}

export default function App() {
  return (
    <div className="flex min-h-screen flex-col overflow-hidden bg-black pt-px font-['Noto_Sans_CJK_KR',sans-serif] text-[13px] leading-4 text-black">
      <div className="ml-[3px] flex flex-1 flex-col">
        <TopBars />
        <div className="flex flex-1 flex-col border-l border-[#c8cacc] bg-[#7a858a]">
          <section className="border-b border-l border-r border-b-[#4a5258] border-l-[#777] border-r-[#3f5564] bg-[#d5d6d8]">
            <div className="flex h-[22px] items-center gap-px border-t border-[#5a6068] bg-gradient-to-b from-[#319cdd] to-[#1183ca] px-0.5 text-white">
              <NamuLogo />
              <h2 className="ml-0.5 flex-1 font-bold leading-4"><span className="font-['Liberation_Mono'] text-[12px]">1950 </span>조건검색</h2>
              {capIcons.map((c, i) => <CapBtn key={c[0]} icon={c} dark={i === 2} />)}
              <span className="w-0.5" />
              {winIcons.map((c) => <CapBtn key={c[0]} icon={c} />)}
            </div>
            <div className="flex gap-1 pb-1 pl-[3px] pr-[5px] pt-1">
              <TreePanel />
              <SearchPanel />
            </div>
          </section>
          <div className="flex flex-1"><ChartWindow /></div>
        </div>
        <StatusBar />
      </div>
      <Taskbar />
    </div>
  );
}
